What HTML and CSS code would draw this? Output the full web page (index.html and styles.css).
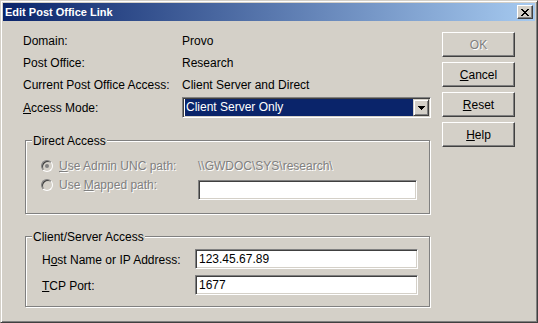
FILE: index.html
```html
<!DOCTYPE html>
<html lang="en">
<head>
    <meta charset="UTF-8">
    <title>Edit Post Office Link</title>
    <link rel="stylesheet" href="styles.css">
</head>
<body>
    <div class="window">
        <div class="titlebar">
            <span class="title">Edit Post Office Link</span>
            <button class="close-btn" aria-label="Close">
                <svg width="8" height="7" viewBox="0 0 8 7" shape-rendering="crispEdges">
                    <path d="M0 0h2v1H0zM6 0h2v1H6zM1 1h2v1H1zM5 1h2v1H5zM2 2h4v1H2zM3 3h2v1H3zM2 4h4v1H2zM1 5h2v1H1zM5 5h2v1H5zM0 6h2v1H0zM6 6h2v1H6z" fill="#000"/>
                </svg>
            </button>
        </div>

        <div class="dialog">
            <div class="main">
                <div class="info">
                    <span>Domain:</span><span>Provo</span>
                    <span>Post Office:</span><span>Research</span>
                    <span>Current Post Office Access:</span><span>Client Server and Direct</span>
                </div>

                <div class="mode-row">
                    <label class="mode-label"><u>A</u>ccess Mode:</label>
                    <div class="combo">
                        <span class="combo-value">Client Server Only</span>
                        <span class="combo-arrow">
                            <svg width="7" height="4" viewBox="0 0 7 4" shape-rendering="crispEdges">
                                <path d="M0 0h7v1H0zM1 1h5v1H1zM2 2h3v1H2zM3 3h1v1H3z" fill="#000"/>
                            </svg>
                        </span>
                    </div>
                </div>

                <!-- Direct Access (disabled) -->
                <div class="group direct">
                    <span class="group-title">Direct Access</span>
                    <div class="direct-grid">
                        <div class="radio-line">
                            <span class="radio checked"></span>
                            <span class="disabled"><u>U</u>se Admin UNC path:</span>
                        </div>
                        <span class="disabled unc">\\GWDOC\SYS\research\</span>
                        <div class="radio-line mapped">
                            <span class="radio"></span>
                            <span class="disabled">Use <u>M</u>apped path:</span>
                        </div>
                        <input type="text" class="field mapped-field" value="">
                    </div>
                </div>

                <!-- Client/Server Access -->
                <div class="group client">
                    <span class="group-title">Client/Server Access</span>
                    <div class="client-grid">
                        <span class="field-label">H<u>o</u>st Name or IP Address:</span>
                        <input type="text" class="field" value="123.45.67.89">
                        <span class="field-label"><u>T</u>CP Port:</span>
                        <input type="text" class="field" value="1677">
                    </div>
                </div>
            </div>

            <div class="actions">
                <button class="btn" disabled>OK</button>
                <button class="btn"><u>C</u>ancel</button>
                <button class="btn"><u>R</u>eset</button>
                <button class="btn"><u>H</u>elp</button>
            </div>
        </div>
    </div>
</body>
</html>
```

FILE: styles.css
```css
body {
    margin: 0;
    font-family: 'Liberation Sans', Arial, sans-serif;
    font-size: 12px;
    color: #000;
    background: #d4d0c8;
}

.window {
    width: 538px;
    height: 323px;
    box-sizing: border-box;
    background: #d4d0c8;
    border: 1px solid;
    border-color: #d4d0c8 #404040 #404040 #d4d0c8;
    box-shadow: inset 1px 1px 0 #fff, inset -1px -1px 0 #808080;
    padding: 2px;
    display: flex;
    flex-direction: column;
}

/* Title bar */
.titlebar {
    height: 18px;
    display: flex;
    align-items: center;
    justify-content: space-between;
    padding: 0 2px;
    background: linear-gradient(to right, #0a246a, #a6caf0);
}

.title {
    color: #fff;
    font-weight: bold;
    font-size: 11px;
    line-height: 14px;
}

.close-btn {
    width: 16px;
    height: 14px;
    padding: 0;
    display: flex;
    align-items: center;
    justify-content: center;
    background: #d4d0c8;
    border: 1px solid;
    border-color: #fff #404040 #404040 #fff;
    box-shadow: inset -1px -1px 0 #808080;
}

.close-btn svg {
    display: block;
    margin-left: -1px;
}

/* Dialog body */
.dialog {
    flex: 1;
    display: flex;
}

.main {
    width: 419px;
    padding: 9px 0 0 20px;
}

.info {
    display: grid;
    grid-template-columns: 159px auto;
    line-height: 22px;
}

.mode-row {
    display: flex;
    align-items: center;
    margin-top: 1px;
    height: 21px;
}

.mode-label {
    width: 159px;
}

.combo {
    width: 249px;
    height: 21px;
    box-sizing: border-box;
    display: flex;
    padding: 1px;
    border: 1px solid;
    border-color: #808080 #fff #fff #808080;
    box-shadow: inset 1px 1px 0 #404040, inset -1px -1px 0 #d4d0c8;
    background: #fff;
}

.combo-value {
    flex: 1;
    margin-left: 1px;
    padding-left: 1px;
    background: #0a246a;
    color: #fff;
    line-height: 17px;
}

.combo-arrow {
    width: 16px;
    height: 17px;
    box-sizing: border-box;
    display: flex;
    align-items: center;
    justify-content: center;
    background: #d4d0c8;
    border: 1px solid;
    border-color: #d4d0c8 #404040 #404040 #d4d0c8;
    box-shadow: inset 1px 1px 0 #fff, inset -1px -1px 0 #808080;
}

/* Group boxes */
.group {
    position: relative;
    margin: 22px 0 0 2px;
    width: 405px;
    box-sizing: border-box;
    border: 1px solid #808080;
    box-shadow: 1px 1px 0 #fff, inset 1px 1px 0 #fff;
}

.group-title {
    position: absolute;
    top: -7px;
    left: 6px;
    padding: 0 1px;
    line-height: 14px;
    background: #d4d0c8;
}

.direct {
    height: 74px;
    padding: 18px 0 0 15px;
}

.client {
    height: 71px;
    padding: 12px 0 0 16px;
}

.direct-grid {
    display: grid;
    grid-template-columns: 157px 219px;
    row-gap: 7px;
    line-height: 14px;
}

.radio-line {
    display: flex;
    align-items: center;
    gap: 6px;
}

.radio-line.mapped {
    align-self: start;
    margin-top: -2px;
}

.radio {
    width: 12px;
    height: 12px;
    box-sizing: border-box;
    border-radius: 50%;
    border: 1px solid;
    border-color: #808080 #fff #fff #808080;
    box-shadow: inset 1px 1px 0 #404040, inset -1px -1px 0 #d4d0c8;
    background: #d4d0c8;
    display: flex;
    align-items: center;
    justify-content: center;
}

.radio.checked::after {
    content: "";
    width: 4px;
    height: 4px;
    border-radius: 50%;
    background: #808080;
}

.disabled {
    color: #808080;
    text-shadow: 1px 1px 0 #fff;
}

.client-grid {
    display: grid;
    grid-template-columns: 153px 223px;
    row-gap: 6px;
    line-height: 14px;
}

.field-label {
    padding-top: 4px;
}

.field {
    height: 20px;
    box-sizing: border-box;
    margin: 0;
    padding: 0 0 0 3px;
    font: inherit;
    color: #000;
    background: #fff;
    border: 1px solid;
    border-color: #808080 #fff #fff #808080;
    box-shadow: inset 1px 1px 0 #404040, inset -1px -1px 0 #d4d0c8;
    outline: none;
}

.client-grid .field {
    width: 223px;
}

.mapped-field {
    width: 219px;
}

/* Buttons */
.actions {
    display: flex;
    flex-direction: column;
    gap: 5px;
    padding-top: 11px;
}

.btn {
    width: 73px;
    height: 25px;
    padding: 0;
    font: inherit;
    color: #000;
    background: #d4d0c8;
    border: 1px solid;
    border-color: #fff #404040 #404040 #fff;
    box-shadow: inset -1px -1px 0 #808080;
}

.btn:disabled {
    color: #808080;
    text-shadow: 1px 1px 0 #fff;
}
```
